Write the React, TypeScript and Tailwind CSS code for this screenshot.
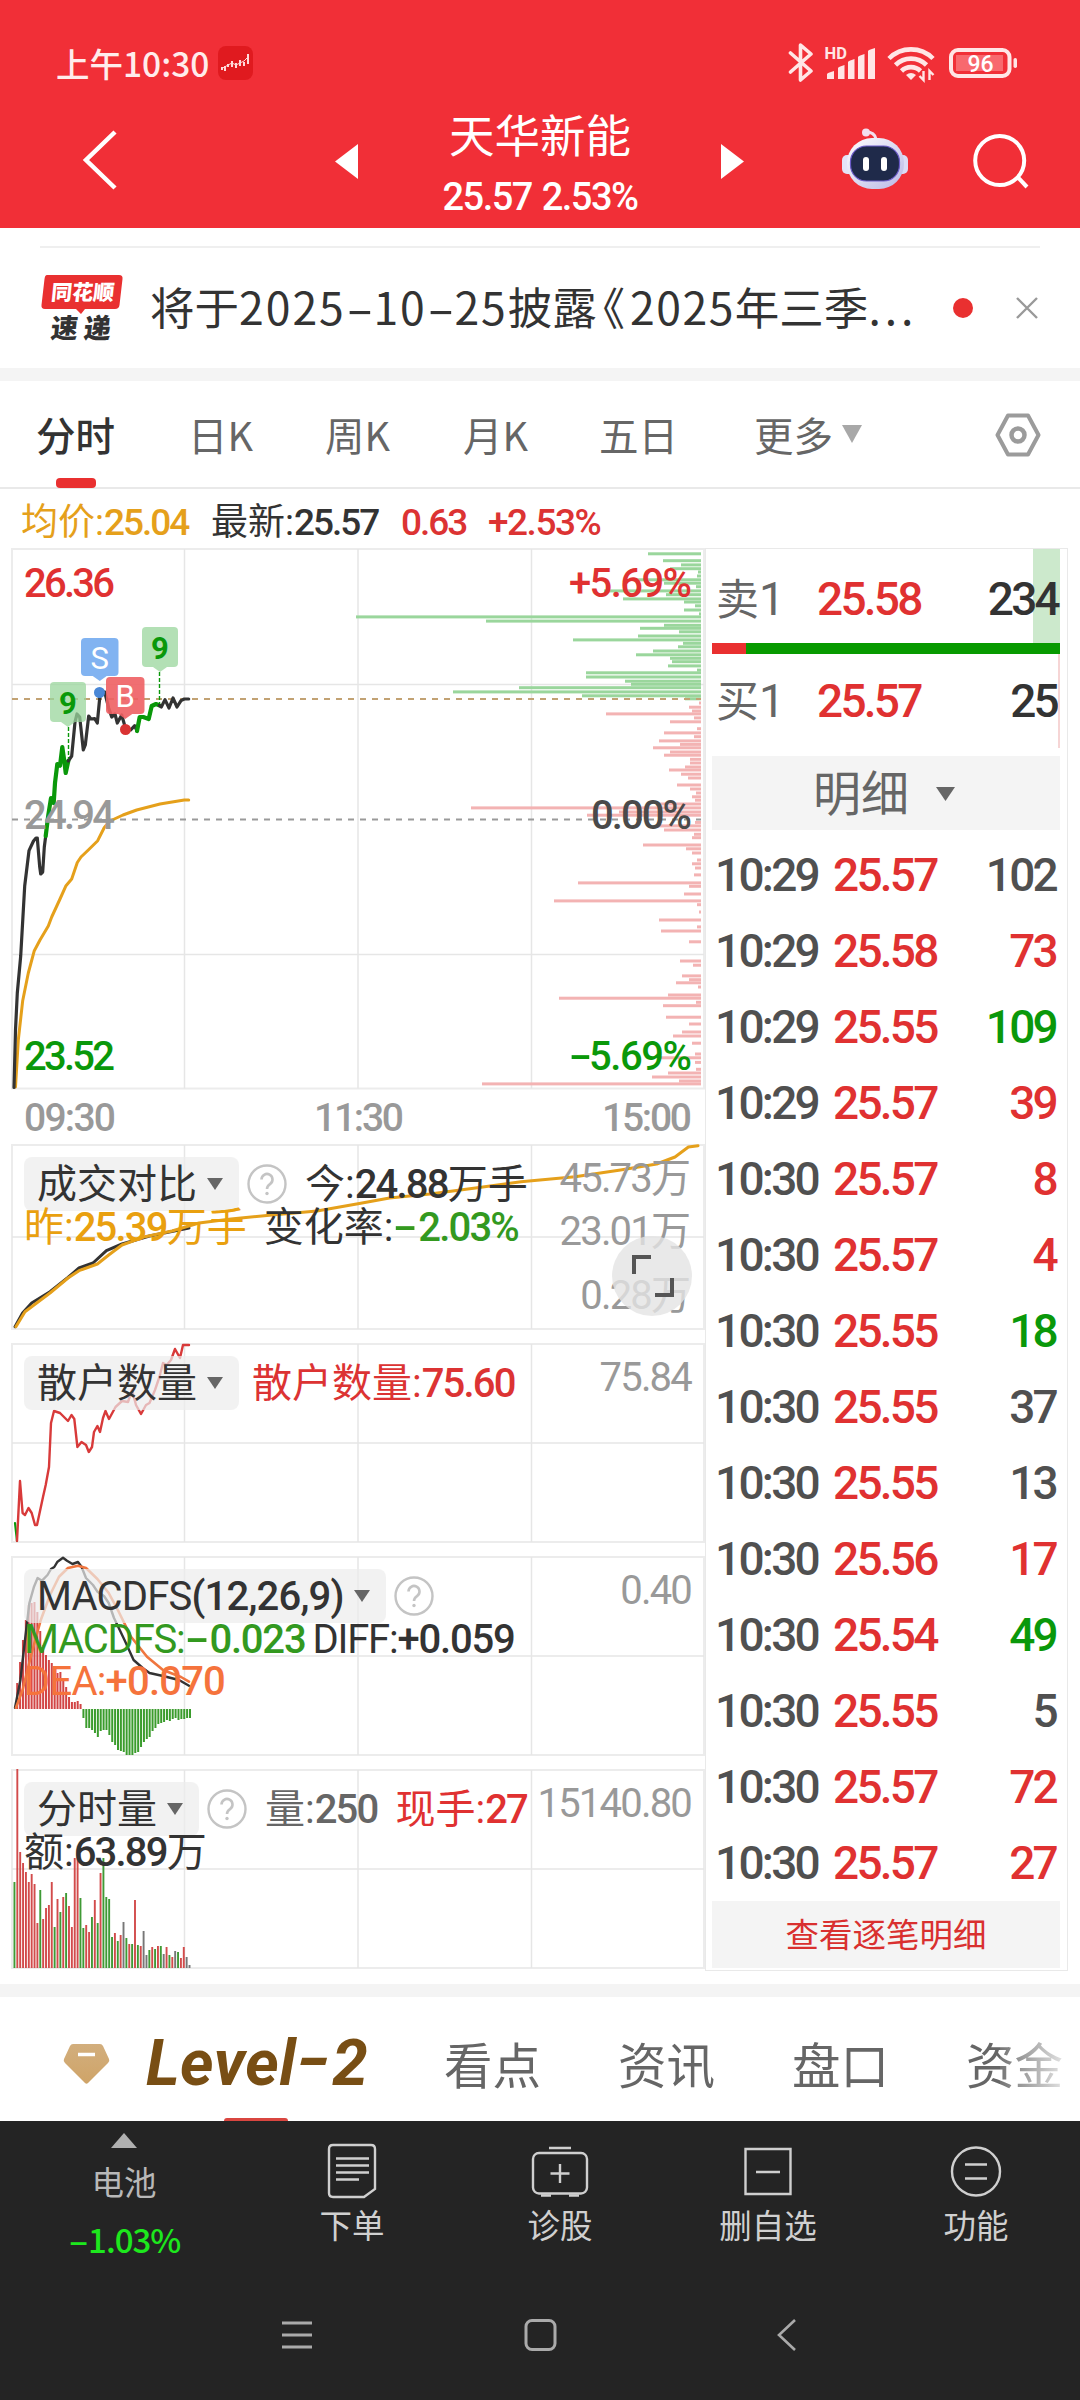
import type { ReactNode } from "react";

type Point = [number, number];

const RED = "#e03131";
const GREEN = "#0a980a";
const AMBER = "#e5a01b";
const INK = "#333333";

const gridX = [184.5, 358, 531.5];

const priceSegments: { color: string; width: number; points: Point[] }[] = [
  {
    color: INK,
    width: 3.2,
    points: [
      [14, 1087.5], [15.5, 1030], [17.3, 993], [20.7, 956], [24.7, 886], [29, 850.7], [33.5, 841], [36, 838],
      [37.3, 838], [39.7, 866.8], [40.7, 874], [42.7, 872], [44.3, 847], [45.7, 836],
    ],
  },
  {
    color: GREEN,
    width: 4.2,
    points: [
      [45.7, 836], [48.3, 815], [51, 798], [53.7, 803], [55, 783], [57.3, 764], [60, 765.7], [62.3, 747],
      [64.3, 761], [65.7, 773], [68.3, 761],
    ],
  },
  {
    color: INK,
    width: 3.2,
    points: [
      [68.3, 761], [71.7, 756], [75, 722], [77, 714], [79.7, 717], [83.3, 750], [85.3, 745], [88.7, 716],
      [90.7, 719], [94.7, 718.6], [97.3, 723], [100, 695], [104.7, 692], [108.7, 708], [111.7, 717], [115, 714],
      [117.3, 723], [121.7, 715], [125.7, 729], [130.7, 730], [134.7, 725.7], [137, 731],
    ],
  },
  {
    color: GREEN,
    width: 4.2,
    points: [
      [137, 731], [139.7, 717], [143.3, 717], [148.7, 719], [151.7, 706], [156, 704], [159.3, 705.4],
    ],
  },
  {
    color: INK,
    width: 3.2,
    points: [
      [159.3, 705.4], [161.3, 707], [165, 699.6], [169, 708], [173, 698], [177, 707], [181, 700.7], [184.3, 699],
      [188.7, 699],
    ],
  },
];

const avgLine: Point[] = [
  [15.5, 1087], [18.3, 1040], [22.7, 1000.7], [28.3, 973], [34.3, 950.7], [40, 940], [48.3, 926], [51.7, 917],
  [60, 899], [66, 885.7], [71.7, 879], [77.3, 862.5], [81, 857], [88.3, 850], [97.7, 840.7], [104.3, 827.5],
  [110, 821], [123, 815], [136.7, 810], [160, 804], [184.3, 800], [188.7, 800],
];

// volume profile, [y, length] measured from the right edge
const sellProfile: Point[] = [
  [553.8, 53], [560.7, 38], [564.9, 20], [568.7, 31], [572, 3], [576, 4], [579.8, 65], [583.2, 37], [586.7, 5],
  [590.9, 97], [594.7, 35], [598.9, 78], [602, 17], [605.8, 6], [610, 17], [613.9, 2], [616.9, 345], [621.1, 215],
  [625.3, 37], [628.3, 61], [631.8, 22], [636, 63], [639.9, 128], [643.3, 18], [646.8, 23], [651, 48], [654.8, 65],
  [658.3, 31], [661.7, 29], [665.9, 33], [670.1, 4], [672.8, 115], [677, 115], [681.2, 76], [684.3, 70],
  [687.7, 182], [691.9, 248], [695.8, 119], [698.8, 16],
];

const buyProfile: Point[] = [
  [703, 2], [707.2, 12], [711, 9], [713.9, 95], [717.9, 7], [721.8, 31], [728.7, 4], [732.9, 37], [736.7, 7],
  [740.9, 42], [744.4, 21], [747.8, 48], [752, 31], [755.2, 37], [759.3, 11], [763, 11], [767, 16], [770, 32],
  [774.2, 20], [778, 13], [785, 24], [789, 11], [793, 5], [796.8, 9], [800.2, 6], [804, 44], [807.9, 230],
  [812, 82], [815.2, 114], [822.4, 6], [825.9, 44], [830, 37], [834.3, 7], [837.7, 9], [845, 58], [848.8, 15],
  [853, 9], [860, 4], [863.8, 9], [868, 6], [874.9, 7], [882.9, 123], [886.3, 12], [894, 17], [900.9, 147],
  [904.7, 4], [912, 2], [920, 42], [926.9, 4], [931, 40], [941.8, 12], [961, 21], [965.2, 8], [975.9, 19],
  [979.7, 12], [982.8, 25], [987, 3], [995, 33], [998.2, 142], [1002.3, 5], [1005.7, 38], [1017.2, 35],
  [1024, 12], [1032, 19], [1036, 28], [1043.2, 9], [1054, 6], [1057.8, 44], [1062.4, 6], [1069.3, 5], [1073, 33],
  [1077, 49], [1081, 22], [1083.9, 219],
];

const yesterdayLine: Point[] = [
  [15.9, 1326.7], [25, 1311.7], [34, 1305], [50, 1293], [68, 1278], [79, 1270.7], [97.4, 1264], [108.7, 1255],
  [122, 1245], [145, 1236.7], [172, 1231], [199, 1223], [231, 1219], [272, 1215], [317, 1211], [358, 1203.7],
  [389.5, 1198], [430, 1194], [475.5, 1188], [521, 1181.7], [575, 1176.7], [620.5, 1170], [656.7, 1164],
  [675, 1157], [688.4, 1147], [698, 1145.7],
];

const todayLine: Point[] = [
  [15, 1326.7], [22.6, 1313], [31.7, 1303], [50, 1291.7], [68, 1277.5], [79, 1268], [93, 1263], [106.4, 1250.7],
  [122, 1244], [149.5, 1236], [189, 1228],
];

const retailLine: Point[] = [
  [17, 1541], [20, 1481], [22.6, 1513], [25, 1515], [28.5, 1508], [31.7, 1513], [35, 1525], [37, 1525],
  [43, 1497], [45.7, 1485], [49, 1467], [51, 1423], [54, 1411], [60, 1413], [68, 1421], [71.5, 1415],
  [74.3, 1419], [77.4, 1447], [81.5, 1442], [86, 1445], [88.8, 1452], [92, 1447], [94, 1432], [97.4, 1426],
  [100, 1432], [103, 1418], [105.5, 1411], [109, 1419], [115.5, 1407], [122, 1401], [128, 1402], [132, 1390],
  [136, 1405], [141, 1414], [146, 1405], [149.5, 1403], [155, 1390], [159.4, 1377], [163, 1363], [166.7, 1365],
  [171, 1360], [175, 1349], [180, 1358], [183, 1345], [189, 1345],
];

const diffLine: Point[] = [
  [15, 1707.7], [20.4, 1680], [25, 1640], [29.4, 1603], [34, 1586.7], [37.6, 1578], [42, 1580.7], [47.5, 1575],
  [51, 1569], [54.3, 1567], [57.5, 1561.7], [63, 1557.7], [67, 1560.7], [72.5, 1564], [78, 1562], [81.5, 1566.7],
  [86, 1578], [93, 1585], [97.4, 1591.7], [104, 1596], [108.7, 1603], [114, 1618], [124.5, 1640], [133.6, 1660],
  [142.7, 1668], [149.5, 1673], [163, 1676], [179, 1680], [189, 1685.7],
];

const deaLine: Point[] = [
  [15.9, 1707.7], [22.6, 1690], [31.7, 1653], [40.8, 1620], [50, 1595], [59, 1576.7], [68, 1568], [78, 1565.7],
  [86, 1568], [97.4, 1579], [108.7, 1593], [118.7, 1611.7], [131, 1636.7], [147, 1656.7], [163, 1670],
  [181, 1677], [189, 1681.7],
];

const macdBars = [
  26, 47, 69, 89, 104, 106, 107, 97, 78, 64, 54, 49, 46, 39, 36, 37, 29, 22, 12, 7, 7, 8, 5, -9, -19, -19, -21,
  -24, -28, -22, -21, -21, -26, -33, -36, -41, -42, -43, -46, -46, -46, -44, -43, -38, -33, -30, -28, -22, -19,
  -15, -14, -13, -11, -12, -10, -9, -11, -10, -10, -9, -9,
];

const volumeBars =
  "g86 r199 r116 r105 r96 r86 r94 r84 r45 g78 r49 r60 r63 r86 g41 r69 g56 r71 g75 r62 r41 r110 r111 g70 g40 r43 r36 g51 r68 g45 r95 g110 g71 g69 g31 r35 g27 r33 k46 g30 r24 g24 r68 g23 r22 k37 k13 g18 r21 g19 r22 g22 k14 r21 g13 r11 k17 g16 r10 r21 k11 k3"
    .split(" ")
    .map((v) => ({ side: v[0], h: Number(v.slice(1)) }));

const sideColor: Record<string, string> = { r: "#d24b4b", g: "#3f9a35", k: "#777777" };

const trades = [
  ["10:29", "25.57", "102", "flat"],
  ["10:29", "25.58", "73", "up"],
  ["10:29", "25.55", "109", "down"],
  ["10:29", "25.57", "39", "up"],
  ["10:30", "25.57", "8", "up"],
  ["10:30", "25.57", "4", "up"],
  ["10:30", "25.55", "18", "down"],
  ["10:30", "25.55", "37", "flat"],
  ["10:30", "25.55", "13", "flat"],
  ["10:30", "25.56", "17", "up"],
  ["10:30", "25.54", "49", "down"],
  ["10:30", "25.55", "5", "flat"],
  ["10:30", "25.57", "72", "up"],
  ["10:30", "25.57", "27", "up"],
];

const tradeColor: Record<string, string> = {
  flat: "text-[#505050]",
  up: "text-[#e03131]",
  down: "text-[#0a980a]",
};

const path = (points: Point[]) => points.map((p) => p.join(",")).join(" ");

// figures take their tracking from --fig, set by the surrounding block
function Num({ children, className = "" }: { children: ReactNode; className?: string }) {
  return <span className={`font-medium tracking-[var(--fig)] ${className}`}>{children}</span>;
}

// wide minus used next to the figures
function Minus() {
  return <span className="mr-[0.12em] inline-block w-[0.5em] origin-left scale-x-[1.8]">-</span>;
}

function Line({ points, color, width = 3 }: { points: Point[]; color: string; width?: number }) {
  return (
    <polyline
      points={path(points)}
      fill="none"
      stroke={color}
      strokeWidth={width}
      strokeLinejoin="round"
      strokeLinecap="round"
    />
  );
}

function Grid({ top, bottom, rows }: { top: number; bottom: number; rows: number[] }) {
  return (
    <g stroke="#e6e6e6" strokeWidth={1.5} fill="none">
      <rect x={12} y={top} width={692} height={bottom - top} stroke="#ececec" strokeWidth={2} />
      {gridX.map((x) => (
        <line key={x} x1={x} x2={x} y1={top} y2={bottom} />
      ))}
      {rows.map((y) => (
        <line key={y} x1={12} x2={704} y1={y} y2={y} />
      ))}
    </g>
  );
}

function Flag({ x, y, w, h, fill, color, label }: { x: number; y: number; w: number; h: number; fill: string; color: string; label: string }) {
  const cx = x + w / 2;
  return (
    <g>
      <rect x={x} y={y} width={w} height={h} rx={4} fill={fill} />
      <path d={`M${cx - 7} ${y + h}h14l-7 5z`} fill={fill} />
      <text x={cx} y={y + h / 2 + 11.5} textAnchor="middle" fill={color} fontSize={31} fontWeight={label === "9" ? 700 : 400}>
        {label}
      </text>
    </g>
  );
}

function Chip({ label, width }: { label: ReactNode; width: string }) {
  return (
    <div className={`flex h-[54px] items-center justify-between rounded-lg bg-[#ececec]/70 pl-[13px] pr-4 ${width}`}>
      <span className="whitespace-nowrap pt-0.5">{label}</span>
      <svg className="h-3 w-4" viewBox="0 0 16 12">
        <path d="M0 0h16l-8 12z" fill="#666" />
      </svg>
    </div>
  );
}

function Help() {
  return (
    <svg className="size-10 shrink-0" viewBox="0 0 40 40" fill="none" stroke="#c4c4c4">
      <circle cx="20" cy="20" r="18.5" strokeWidth="2.4" />
      <path d="M14.5 15.5a5.5 5.5 0 1 1 8.5 4.6c-2 1.3-3 2.4-3 4.9" strokeWidth="2.6" />
      <circle cx="20" cy="29.5" r="1.7" fill="#c4c4c4" stroke="none" />
    </svg>
  );
}

function Panel({ view, height, children, overlay, axis }: { view: string; height: string; children: ReactNode; overlay: ReactNode; axis?: ReactNode }) {
  return (
    <div className={`relative w-[694px] text-[40px] leading-[42px] [--fig:-0.045em] ${height}`}>
      <svg className="block size-full" viewBox={view}>
        {children}
      </svg>
      <div className="absolute left-[13px] top-[13px] whitespace-nowrap">{overlay}</div>
      <div className="absolute right-[14px] top-[14px] text-right text-[#999]">{axis}</div>
    </div>
  );
}

function StatusBar() {
  return (
    <div className="flex h-[96px] items-end pl-[56px] pr-[62px] text-white">
      <span className="mb-[8px] font-['Noto_Sans_CJK_SC',sans-serif] text-[33.5px] font-medium leading-[50px] text-[#ffecec]">上午10:30</span>
      <svg className="mb-4 ml-[9px] h-[34px] w-[35px]" viewBox="0 0 35 34">
        <rect width="35" height="34" rx="8" fill="#e01a1f" />
        <path d="M4 24v-3M7 25v-5M10 21v-3M14 21v-6M18 22v-5M22 20v-6M26 20v-4M30 18V8" stroke="#ffd9d9" strokeWidth="2" />
        <path d="M3 23l7-4 4-2 4 2 8-4 5-5" stroke="#ffd9d9" strokeWidth="1" fill="none" />
      </svg>
      <svg className="mb-3 ml-auto h-[44px] w-[230px]" viewBox="788 40 230 44" fill="none" stroke="#ffe6e6">
        <path d="M790.5 53l20.500 18-10.500 9V45l10.500 9-20.500 18" strokeWidth="3.6" strokeLinejoin="round" strokeLinecap="round" />
        <text x="824.5" y="59" fontSize="16.5" fontWeight="700" fill="#ffe6e6" stroke="none">
          HD
        </text>
        <path
          d="M827 79v-5q0-1 7-3v8zM838 79V68q0-1 6.5-3v14zM848 79V62q0-1 6.5-3v20zM858 79V57q0-1 6.5-3v25zM868 79V51q0-1 7-3v31z"
          fill="#ffe6e6"
          stroke="none"
        />
        <path d="M889 58.5a31 31 0 0 1 44 0M895.5 65a22 22 0 0 1 31 0M901.5 71a13.5 13.5 0 0 1 19 0" strokeWidth="4.6" />
        <path d="M911 80l-5-5q5-4 10 0z" fill="#ffe6e6" stroke="none" />
        <path d="M923.5 71v9l-4-4M929.5 80v-9l4 4" strokeWidth="2.4" />
        <rect x="951" y="50" width="58.5" height="26" rx="7" strokeWidth="4" />
        <rect x="956" y="55" width="47" height="16" fill="#f8696e" stroke="none" />
        <rect x="1013.5" y="58" width="3.5" height="10" rx="1.7" fill="#ffe6e6" stroke="none" />
        <text x="980.5" y="71.5" textAnchor="middle" fontSize="23" fontWeight="500" fill="#fff" stroke="none">
          96
        </text>
      </svg>
    </div>
  );
}

function TitleBar() {
  return (
    <div className="flex h-[132px] pl-[82px] pr-[50px] text-white">
      <svg className="mt-[33px] h-[62px] w-9" viewBox="0 0 36 62" fill="none" stroke="#fff" strokeWidth="4.5">
        <path d="M33 3L4 31l29 28" />
      </svg>
      <svg className="ml-[217px] mt-12 h-9 w-6" viewBox="0 0 24 36">
        <path d="M0 17.5L23 0v35z" fill="#fff" />
      </svg>
      <div className="flex w-[362px] flex-col items-center">
        <h1 className="mt-[7px] font-['Noto_Sans_CJK_SC',sans-serif] text-[45.5px] leading-[60px]">天华新能</h1>
        <p className="mt-[13px] text-[38px] leading-[42px] [--fig:-0.04em] [word-spacing:2px]">
          <Num>25.57 2.53%</Num>
        </p>
      </div>
      <svg className="mt-12 h-9 w-6" viewBox="0 0 24 36">
        <path d="M23 17.5L0 0v35z" fill="#fff" />
      </svg>
      <svg className="ml-auto mt-[31px] h-[64px] w-[70px]" viewBox="840 127 70 64">
        <defs>
          <linearGradient id="head" x1="0" y1="0" x2="1" y2="1">
            <stop offset="0" stopColor="#ffffff" />
            <stop offset="1" stopColor="#b9b8e6" />
          </linearGradient>
        </defs>
        <path d="M866 132c6 0 9 2 10 7" stroke="#f3dfee" strokeWidth="3" fill="none" />
        <circle cx="866" cy="132.5" r="4" fill="#f3dfee" />
        <rect x="842" y="155" width="12" height="19" rx="5" fill="#e4e3f8" />
        <rect x="897" y="155" width="11" height="19" rx="5" fill="#dcdcf6" />
        <rect x="847" y="138" width="57" height="51" rx="25" fill="url(#head)" />
        <rect x="850.5" y="146" width="49" height="35" rx="16" fill="#1f2a4a" stroke="#6a5ac8" strokeWidth="1.2" />
        <rect x="863" y="157" width="6" height="14" rx="3" fill="#fff" />
        <rect x="881" y="157" width="6" height="14" rx="3" fill="#fff" />
      </svg>
      <svg className="ml-[62px] mt-[35px] h-[60px] w-[58px]" viewBox="972 131 58 60" fill="none" stroke="#fff" strokeWidth="4">
        <circle cx="999.7" cy="160.5" r="24.5" />
        <path d="M1017 176.5l10 10.5" />
      </svg>
    </div>
  );
}

function Notice() {
  return (
    <div className="px-10 pt-[18px]">
      <div className="h-[2px] bg-[#efefef]" />
      <div className="flex h-[120px] items-center">
        <svg className="h-[70px] w-[84px] overflow-visible" viewBox="40 272 84 70">
          <path d="M47 274h72q4 0 3.5 4l-3 26q-.5 4-4.5 4H85l-4 5-5-5H45q-4 0-3.5-4l3-26q.5-4 2.5-4z" fill="#e93030" />
          <g fontFamily="'Noto Sans CJK SC', sans-serif" fontWeight="900">
            <text transform="translate(50.5 299) skewX(-6)" fontSize="21" fill="#fff">
              同花顺
            </text>
            <text transform="translate(50 336.5) skewX(-6)" fontSize="27" textLength="60" fill="#333">
              速递
            </text>
          </g>
        </svg>
        <p className="-mt-[3px] ml-[26px] whitespace-nowrap font-['Noto_Sans_CJK_SC',sans-serif] text-[44.5px] text-[#333]">
          将于
          <span className="tracking-[2px]">2025<Minus />10<Minus />25</span>
          披露
          <span className="ml-[6px] mr-[5px] [font-feature-settings:'halt']">《</span>
          <span className="tracking-[1.5px]">2025</span>
          年三季<span className="tracking-[4px]">...</span>
        </p>
        <span className="absolute left-[953px] size-5 rounded-full bg-[#e93030]" />
        <svg className="absolute left-[1016px] size-[22px]" viewBox="0 0 22 22" stroke="#999" strokeWidth="2.4">
          <path d="M1 1l20 20M21 1L1 21" />
        </svg>
      </div>
    </div>
  );
}

function PeriodTabs() {
  return (
    <nav className="relative flex h-[108px] items-center border-b-2 border-[#e9e9e9] pl-9 pr-[39px] font-['Noto_Sans_CJK_SC',sans-serif] text-[39.5px] text-[#666]">
      <span className="w-[152px] font-medium text-[#333]">分时</span>
      <span className="w-[137px]">日K</span>
      <span className="w-[138px]">周K</span>
      <span className="w-[136px]">月K</span>
      <span className="w-[155px]">五日</span>
      <span>更多</span>
      <svg className="ml-[9px] h-[18px] w-5" viewBox="0 0 20 18">
        <path d="M0 0h20l-10 18z" fill="#a8a8a8" />
      </svg>
      <svg className="ml-auto mt-0.5 h-11 w-[46px]" viewBox="0 0 46 44" fill="none" stroke="#9b9b9b" strokeLinejoin="round">
        <path d="M13 2.5h20L43.5 22 33 41.5H13L2.5 22z" strokeWidth="4" />
        <circle cx="23" cy="22" r="6.5" strokeWidth="4.5" />
      </svg>
      <span className="absolute -bottom-px left-14 h-[10px] w-10 rounded-[4px] bg-[#e93030]" />
    </nav>
  );
}

function PriceChart() {
  return (
    <svg className="block h-[590px] w-[694px] overflow-visible" viewBox="11 548 694 590" fontFamily="Roboto, sans-serif">
      <Grid top={549} bottom={1088.5} rows={[684.5, 954.5]} />
      {sellProfile.map(([y, w]) => (
        <rect key={y} x={701 - w} y={y - 1.5} width={w} height={3} fill="#9ad69c" />
      ))}
      {buyProfile.map(([y, w]) => (
        <rect key={y} x={701 - w} y={y - 1.5} width={w} height={3} fill="#f3b3b3" />
      ))}
      <line x1={12} x2={701} y1={699} y2={699} stroke="#c2a273" strokeWidth={2} strokeDasharray="6 6" />
      <line x1={12} x2={701} y1={819.6} y2={819.6} stroke="#9a9a9a" strokeWidth={2} strokeDasharray="6 6" />
      <Line points={avgLine} color={AMBER} />
      {priceSegments.map((s, i) => (
        <Line key={i} points={s.points} color={s.color} width={s.width} />
      ))}
      <g stroke="#0a980a" strokeWidth={1.4} strokeDasharray="4 2">
        <path d="M68.5 727v32M159.5 672v32" />
      </g>
      <circle cx={99.5} cy={692.5} r={5.5} fill="#4a87d6" />
      <circle cx={125.5} cy={729.5} r={5.5} fill="#d93333" />
      <Flag x={50} y={682} w={36} h={40} fill="#9ad69cbf" color={GREEN} label="9" />
      <Flag x={142} y={627} w={36} h={40} fill="#9ad69cbf" color={GREEN} label="9" />
      <Flag x={81} y={638} w={37.5} h={38} fill="#73abf0e6" color="#fff" label="S" />
      <Flag x={106} y={677} w={38.5} h={37} fill="#ee5f63e6" color="#fff" label="B" />
      <g fontSize={40} fontWeight={500}>
        <text x={24} y={597} fill={RED} textLength={91}>26.36</text>
        <text x={24} y={829} fill="#999" textLength={91}>24.94</text>
        <text x={24} y={1069.5} fill={GREEN} textLength={91}>23.52</text>
        <text x={569} y={597} fill={RED} textLength={123}>+5.69%</text>
        <text x={591} y={829} fill="#4a4a4a" textLength={101}>0.00%</text>
        <text x={589} y={1070} fill={GREEN} textLength={103}>5.69%</text>
        <text transform="translate(569 1070) scale(1.7 1)" fill={GREEN}>-</text>
        <g fill="#999" fontSize={39}>
          <text x={24} y={1130.5} textLength={92}>09:30</text>
          <text x={314} y={1130.5} textLength={90}>11:30</text>
          <text x={602} y={1130.5} textLength={90}>15:00</text>
        </g>
      </g>
    </svg>
  );
}

function VolumeComparePanel() {
  return (
    <Panel
      view="11 1144 694 186"
      height="mt-[6px] h-[186px]"
      overlay={
        <>
          <div className="flex items-center text-[#333]">
            <Chip width="w-[215px]" label="成交对比" />
            <div className="ml-2"><Help /></div>
            <span className="ml-[18px] pt-0.5">今:<Num>24.88</Num>万手</span>
          </div>
          <div className="-mt-1">
            <span className="text-[#e9a00f]">昨:<Num>25.39</Num>万手</span>
            <span className="ml-[17px] text-[#333]">变化率:</span>
            <Num className="text-[#33991f]"><Minus />2.03%</Num>
          </div>
        </>
      }
      axis={
        <>
          <div><Num className="font-normal">45.73</Num>万</div>
          <div className="mt-[11px]"><Num className="font-normal">23.01</Num>万</div>
          <div className="mt-[22px]"><Num className="font-normal">0.28</Num>万</div>
          <svg className="absolute -right-[1px] top-[78px] size-20" viewBox="0 0 80 80">
            <circle cx="40" cy="40" r="40" fill="#e4e4e4" fillOpacity=".8" />
            <path d="M22 38V21h17M60 42v17H43" fill="none" stroke="#555" strokeWidth="4" />
          </svg>
        </>
      }
    >
      <Grid top={1145} bottom={1329} rows={[1237]} />
      <Line points={todayLine} color={INK} />
      <Line points={yesterdayLine} color={AMBER} />
    </Panel>
  );
}

function RetailPanel() {
  return (
    <Panel
      view="11 1343 694 200"
      height="mt-[13px] h-[200px]"
      overlay={
        <div className="flex items-center text-[#333]">
          <Chip width="w-[215px]" label="散户数量" />
          <span className="ml-[13px] pt-0.5 text-[#dc3333]">散户数量:<Num>75.60</Num></span>
        </div>
      }
      axis={<Num className="font-normal">75.84</Num>}
    >
      <Grid top={1344} bottom={1542} rows={[1443]} />
      <Line points={[[15, 1523], [17, 1541]]} color={GREEN} width={2.2} />
      <Line points={retailLine} color="#d83a3a" width={2.4} />
    </Panel>
  );
}

function MacdPanel() {
  return (
    <Panel
      view="11 1556 694 200"
      height="mt-[13px] h-[200px]"
      overlay={
        <div className="tracking-[-0.02em] [--fig:-0.02em]">
          <div className="flex items-center text-[#333]">
            <Chip width="w-[362px]" label={<>MACDFS<Num>(12,26,9)</Num></>} />
            <div className="ml-2"><Help /></div>
          </div>
          <div className="-mt-1 tracking-[-0.03em] [--fig:-0.03em]">
            <span className="text-[#33991f]">MACDFS:<Num><Minus />0.023</Num></span>
            <span className="ml-[7px] text-[#333]">DIFF:<Num>+0.059</Num></span>
          </div>
          <div className="text-[#f5733c]">DEA:<Num>+0.070</Num></div>
        </div>
      }
      axis={<Num className="font-normal">0.40</Num>}
    >
      <Grid top={1557} bottom={1755} rows={[1656]} />
      {macdBars.map((v, i) => (
        <rect
          key={i}
          x={16.2 + i * 2.88}
          y={v > 0 ? 1709 - v : 1709}
          width={2}
          height={Math.abs(v)}
          fill={v > 0 ? "#d24545" : "#3b9c2d"}
        />
      ))}
      <Line points={diffLine} color={INK} width={2.4} />
      <Line points={deaLine} color="#f0763f" width={2.6} />
    </Panel>
  );
}

function VolumePanel() {
  return (
    <Panel
      view="11 1769 694 200"
      height="mt-[13px] h-[200px]"
      overlay={
        <>
          <div className="flex items-center text-[#333]">
            <Chip width="w-[175px]" label="分时量" />
            <div className="ml-2"><Help /></div>
            <span className="ml-[18px] pt-0.5 text-[#666]">量:<Num>250</Num></span>
            <span className="ml-[18px] pt-0.5 text-[#e03131]">现手:<Num>27</Num></span>
          </div>
          <div className="-mt-1 text-[#333]">额:<Num>63.89</Num>万</div>
        </>
      }
      axis={<Num className="font-normal">15140.80</Num>}
    >
      <Grid top={1770} bottom={1968} rows={[1869]} />
      {volumeBars.map(({ side, h }, i) => (
        <rect key={i} x={13.5 + i * 2.87} y={1968 - h} width={1.9} height={h} fill={sideColor[side]} />
      ))}
    </Panel>
  );
}

function OrderBook() {
  return (
    <aside className="flex h-[1423px] w-[363px] flex-col border border-[#e9e9e9] pl-[6px] pr-[7px] text-[46px] [--fig:-0.06em]">
      <div className="relative flex h-[94px] items-center pt-[7px]">
        <span className="absolute right-0 top-0 h-full w-[27px] bg-[#cce9cc]" />
        <span className="relative w-[105px] pl-1 text-[43px] text-[#666]">卖<span className="text-[46px]">1</span></span>
        <Num className="relative text-[#e03131]">25.58</Num>
        <Num className="relative ml-auto mr-[2px] text-[#333]">234</Num>
      </div>
      <div className="flex h-[11px]">
        <span className="w-[34px] bg-[#e93030]" />
        <span className="flex-1 bg-[#079a00]" />
      </div>
      <div className="relative flex h-[94px] items-center">
        <span className="absolute right-0 top-0 h-full w-[2px] bg-[#f6d5d5]" />
        <span className="w-[105px] pl-1 text-[43px] text-[#666]">买<span className="text-[46px]">1</span></span>
        <Num className="text-[#e03131]">25.57</Num>
        <Num className="ml-auto mr-[3px] text-[#333]">25</Num>
      </div>
      <div className="mt-2 flex h-[74px] items-center bg-[#f4f4f4] pl-[101px] text-[#666]">
        <span className="mt-1 text-[48px]">明细</span>
        <svg className="ml-[27px] mt-0.5 h-[14px] w-[19px]" viewBox="0 0 19 14">
          <path d="M0 0h19l-9.5 14z" fill="#666" />
        </svg>
      </div>
      <ul className="pt-[7px]">
        {trades.map(([time, price, qty, side], i) => (
          <li key={i} className="flex h-[76px] items-center pr-1 pt-px">
            <Num className="w-[121px] pl-[3px] text-[#505050]">{time}</Num>
            <Num className="text-[#e03131]">{price}</Num>
            <Num className={`ml-auto ${tradeColor[side]}`}>{qty}</Num>
          </li>
        ))}
      </ul>
      <button className="h-[67px] bg-[#f4f4f4] pt-1 text-[33.5px] text-[#d9302f]">查看逐笔明细</button>
    </aside>
  );
}

function InfoTabs() {
  return (
    <nav className="relative flex h-[124px] items-center overflow-hidden pb-[11px] pt-5 font-['Noto_Sans_CJK_SC',sans-serif] text-[48.5px] text-[#666]">
      <svg className="ml-[63px] h-[42px] w-[47px] shrink-0" viewBox="0 0 47 42">
        <defs>
          <linearGradient id="gem" x1="0" y1="0" x2="0" y2="1">
            <stop offset="0" stopColor="#d2ae7d" />
            <stop offset="1" stopColor="#cfa468" />
          </linearGradient>
        </defs>
        <path d="M10 1h27q2 0 3 2l6 13q1 2-1 4L25 40q-1.5 1.5-3 0L2 20q-2-2-1-4L7 3q1-2 3-2z" fill="url(#gem)" />
        <path d="M15 11.5h17" stroke="#fff" strokeWidth="3.5" />
      </svg>
      <span className="ml-9 w-[298px] shrink-0 font-['Roboto',sans-serif] text-[64px] font-bold italic leading-none tracking-[0.5px] text-[#784e14]">
        Level<span className="inline-block w-9 origin-left -translate-y-1 scale-x-[1.45]">-</span>2
      </span>
      <span className="w-[174px] shrink-0">看点</span>
      <span className="w-[174px] shrink-0">资讯</span>
      <span className="w-[174px] shrink-0">盘口</span>
      <span className="shrink-0">资金</span>
      <span className="absolute right-0 top-0 h-full w-[80px] bg-linear-to-r from-white/10 to-white" />
      <span className="absolute bottom-0 left-[224px] h-[3px] w-16 rounded-t-[3px] bg-[#d94640]" />
    </nav>
  );
}

function Action({ label, children }: { label: string; children: ReactNode }) {
  return (
    <div className="flex w-[208px] flex-col items-center pt-5">
      <svg className="h-[60px] w-[60px]" viewBox="-30 -30 60 60" fill="none" stroke="#cfcfcf" strokeWidth="2.4">
        {children}
      </svg>
      <span className="mt-0.5 leading-[42px]">{label}</span>
    </div>
  );
}

function BottomBar() {
  return (
    <footer className="h-[279px] bg-[#242424] font-['Noto_Sans_CJK_SC',sans-serif] text-[32.5px] text-[#d0d0d0]">
      <div className="flex h-[184px]">
        <div className="flex w-[248px] flex-col items-center pt-3">
          <svg className="h-[15px] w-[26px]" viewBox="0 0 26 15">
            <path d="M13 0l13 15H0z" fill="#b0b0b0" />
          </svg>
          <span className="mt-3 leading-[42px] text-[#b8b8b8]">电池</span>
          <span className="mt-4 text-[33px] font-medium leading-[42px] tracking-[-1px] text-[#1de81d]"><Minus />1.03%</span>
        </div>
        <Action label="下单">
          <path d="M-19-26h38q4 0 4 4v40L12 26h-31q-4 0-4-4v-44q0-4 4-4zM-16-12.5h33M-16-5.5h33M-16 1.5h33M-16 8.5H7" />
        </Action>
        <Action label="诊股">
          <rect x="-27" y="-18" width="54" height="40.5" rx="6" />
          <path d="M-11-23h22M0-7v19M-9.5 2.5h19M-19 24.5h10M9 24.5h10" />
        </Action>
        <Action label="删自选">
          <path d="M-22.5-22h45v45h-45zM-12 1h24" />
        </Action>
        <Action label="功能">
          <circle cy="0.5" r="24" />
          <path d="M-11-6.5h22M-11 7.5h22" />
        </Action>
      </div>
      <div className="flex pl-[282px] pt-[13px]">
        <svg className="h-9 w-[30px]" viewBox="0 0 30 36" stroke="#aaa" strokeWidth="3">
          <path d="M0 5h30M0 17h30M0 29h30" />
        </svg>
        <svg className="ml-[212px] h-9 w-[33px]" viewBox="0 0 33 36" fill="none" stroke="#aaa" strokeWidth="3">
          <rect x="2" y="2.5" width="29" height="29" rx="6" />
        </svg>
        <svg className="ml-[219px] h-9 w-[22px]" viewBox="0 0 22 36" fill="none" stroke="#aaa" strokeWidth="2.6">
          <path d="M19 2L3 17l16 15" />
        </svg>
      </div>
    </footer>
  );
}

export default function App() {
  return (
    <div className="relative h-[2400px] w-[1080px] overflow-hidden bg-white font-['Roboto','Noto_Sans_CJK_SC',sans-serif]">
      <header className="h-[228px] bg-[#f12f37]">
        <StatusBar />
        <TitleBar />
      </header>
      <Notice />
      <div className="h-[13px] bg-[#f4f4f4]" />
      <PeriodTabs />
      <div className="flex h-[59px] items-center whitespace-nowrap pl-[21px] pt-[8px] text-[37px] text-[#333] [--fig:-0.055em]">
        <span className="w-[190px] text-[#e5a01b]">均价:<Num>25.04</Num></span>
        <span className="w-[190px]">最新:<Num>25.57</Num></span>
        <Num className="w-[87px] text-[#dc3333]">0.63</Num>
        <span className="text-[#dc3333] [--fig:-0.04em]"><Num>+2.53%</Num></span>
      </div>
      <main className="flex h-[1436px] pl-[11px]">
        <div className="w-[694px]">
          <PriceChart />
          <VolumeComparePanel />
          <RetailPanel />
          <MacdPanel />
          <VolumePanel />
        </div>
        <OrderBook />
      </main>
      <div className="h-[13px] bg-[#f4f4f4]" />
      <InfoTabs />
      <BottomBar />
    </div>
  );
}
